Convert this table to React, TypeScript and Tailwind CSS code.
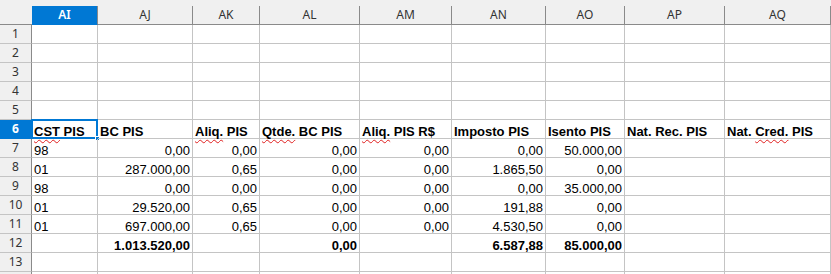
import React from 'react';

const COLS = ['AI', 'AJ', 'AK', 'AL', 'AM', 'AN', 'AO', 'AP', 'AQ'];
const ACTIVE_COL = 0;
const ACTIVE_ROW = 6;

type Cell = { v: string; right?: boolean; bold?: boolean; spell?: string };

const header: Cell[] = [
  { v: 'CST PIS', bold: true, spell: 'CST' },
  { v: 'BC PIS', bold: true },
  { v: 'Aliq. PIS', bold: true, spell: 'Aliq.' },
  { v: 'Qtde. BC PIS', bold: true, spell: 'Qtde.' },
  { v: 'Aliq. PIS R$', bold: true, spell: 'Aliq.' },
  { v: 'Imposto PIS', bold: true },
  { v: 'Isento PIS', bold: true },
  { v: 'Nat. Rec. PIS', bold: true },
  { v: 'Nat. Cred. PIS', bold: true, spell: 'Cred.' },
];

const num = (v: string, bold = false): Cell => ({ v, right: true, bold });

const data: Record<number, Cell[]> = {
  6: header,
  7: [{ v: '98' }, num('0,00'), num('0,00'), num('0,00'), num('0,00'), num('0,00'), num('50.000,00')],
  8: [{ v: '01' }, num('287.000,00'), num('0,65'), num('0,00'), num('0,00'), num('1.865,50'), num('0,00')],
  9: [{ v: '98' }, num('0,00'), num('0,00'), num('0,00'), num('0,00'), num('0,00'), num('35.000,00')],
  10: [{ v: '01' }, num('29.520,00'), num('0,65'), num('0,00'), num('0,00'), num('191,88'), num('0,00')],
  11: [{ v: '01' }, num('697.000,00'), num('0,65'), num('0,00'), num('0,00'), num('4.530,50'), num('0,00')],
  12: [{ v: '' }, num('1.013.520,00', true), { v: '' }, num('0,00', true), { v: '' }, num('6.587,88', true), num('85.000,00', true)],
};

// row 14 only peeks in at the bottom edge, its label stays hidden
const rows = Array.from({ length: 14 }, (_, i) => i + 1);

// spell-check squiggle on a single word
const CellText = ({ cell }: { cell: Cell }) => {
  if (!cell.spell) return <>{cell.v}</>;
  const i = cell.v.indexOf(cell.spell);
  return (
    <>
      {cell.v.slice(0, i)}
      <span className="underline decoration-wavy decoration-[#e02020] decoration-1 underline-offset-[3px]">{cell.spell}</span>
      {cell.v.slice(i + cell.spell.length)}
    </>
  );
};

export default function App() {
  return (
    <div className="w-[831px] h-[274px] overflow-hidden bg-white select-none">
      <div className="h-[6px] bg-[#f0f0f0]" />
      <div className="grid grid-cols-[32px_66px_95px_67px_100px_92px_94px_79px_100px_1fr] auto-rows-[19px]">
        {/* corner + column headers */}
        <div className="bg-[#f0f0f0] border-b border-[#8a8a8a]" />
        {COLS.map((c, i) => (
          <div
            key={c}
            className={`flex items-center justify-center border-b border-r text-[12px] [font-family:'Noto_Sans',sans-serif] ${
              i === ACTIVE_COL
                ? 'bg-[#0078d4] text-white border-b-[#0078d4] border-r-[#8a8a8a] font-semibold'
                : 'bg-[#f0f0f0] text-[#333] border-[#8a8a8a]'
            }`}
          >
            {c}
          </div>
        ))}

        {rows.map((r) => (
          <React.Fragment key={r}>
            <div
              className={`flex items-center justify-center border-b border-r text-[12px] [font-family:'Noto_Sans',sans-serif] ${
                r === ACTIVE_ROW
                  ? 'bg-[#0078d4] text-white font-bold border-b-[#0078d4] border-r-[#0078d4]'
                  : 'bg-[#f0f0f0] text-[#333] border-b-[#c4c4c4] border-r-[#8a8a8a]'
              }`}
            >
              {r < 14 ? r : null}
            </div>
            {COLS.map((c, ci) => {
              const cell = data[r]?.[ci];
              const active = r === ACTIVE_ROW && ci === ACTIVE_COL;
              return (
                <div
                  key={c}
                  className={`relative flex items-end overflow-visible whitespace-nowrap border-b border-r border-[#c4c4c4] px-[2px] text-[13px] leading-[13px] text-black [font-family:'Liberation_Sans',Arial,sans-serif] ${
                    cell?.right ? 'justify-end' : 'justify-start'
                  } ${cell?.bold ? 'font-bold' : ''}`}
                >
                  <span>{cell ? <CellText cell={cell} /> : null}</span>
                  {active && (
                    <>
                      <div className="absolute -left-px -top-px -right-px -bottom-px border-2 border-[#0078d4] pointer-events-none" />
                      <div className="absolute -right-[3px] -bottom-[3px] w-[5px] h-[5px] bg-[#0078d4] border border-white" />
                    </>
                  )}
                </div>
              );
            })}
          </React.Fragment>
        ))}
      </div>
    </div>
  );
}
